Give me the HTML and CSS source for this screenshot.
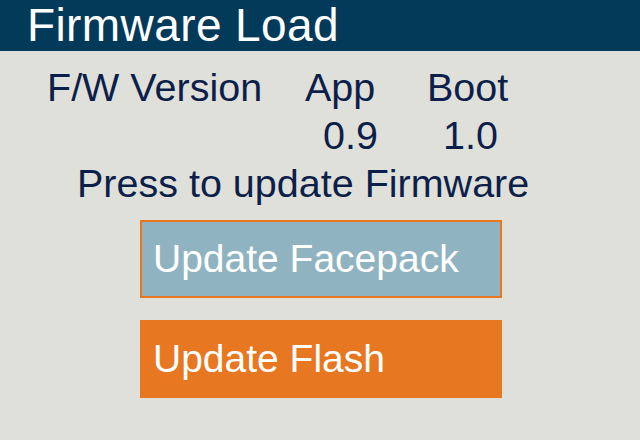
FILE: index.html
```html
<!DOCTYPE html>
<html lang="en">
<head>
  <meta charset="UTF-8">
  <title>Firmware Load</title>
  <link rel="stylesheet" href="styles.css">
</head>
<body>
  <h1 class="title-bar">Firmware Load</h1>

  <div class="version-row">
    <span class="col-label">F/W Version</span>
    <span class="col-app">App</span>
    <span class="col-boot">Boot</span>
  </div>
  <div class="version-row values">
    <span class="col-app">0.9</span>
    <span class="col-boot">1.0</span>
  </div>

  <p class="hint">Press to update Firmware</p>

  <div class="actions">
    <button type="button" class="update-btn facepack">Update Facepack</button>
    <button type="button" class="update-btn flash">Update Flash</button>
  </div>
</body>
</html>
```

FILE: styles.css
```css
body {
  margin: 0;
  background: #e0e0da;
  font-family: "Liberation Sans", Arial, sans-serif;
  color: #0c1f4a;
  width: 640px;
  height: 440px;
  overflow: hidden;
}
.title-bar {
  margin: 0;
  height: 51px;
  line-height: 51px;
  padding-left: 27px;
  background: #033a5a;
  color: #ffffff;
  font-size: 46px;
  letter-spacing: 0.4px;
  font-weight: normal;
}
.version-row {
  display: flex;
  font-size: 39.5px;
  line-height: 48px;
  padding-left: 47px;
}
.version-row:first-of-type {
  margin-top: 12px;
}
.col-label {
  width: 258px;
}
.col-app {
  width: 122px;
}
.values {
  padding-left: 323px;
}
.values .col-app {
  width: 120px;
}
.hint {
  margin: 0;
  font-size: 39.5px;
  line-height: 48px;
  padding-left: 77px;
}
.actions {
  display: flex;
  flex-direction: column;
  gap: 22px;
  margin-top: 13px;
  padding-left: 140px;
}
.update-btn {
  box-sizing: border-box;
  width: 362px;
  height: 78px;
  display: flex;
  align-items: center;
  padding: 0 0 0 11px;
  font-family: "Liberation Sans", Arial, sans-serif;
  font-size: 39px;
  color: #ffffff;
  text-align: left;
  border: 2px solid #e87722;
  cursor: pointer;
}
.facepack {
  background: #8fb3c0;
}
.flash {
  background: #e87722;
}
```
